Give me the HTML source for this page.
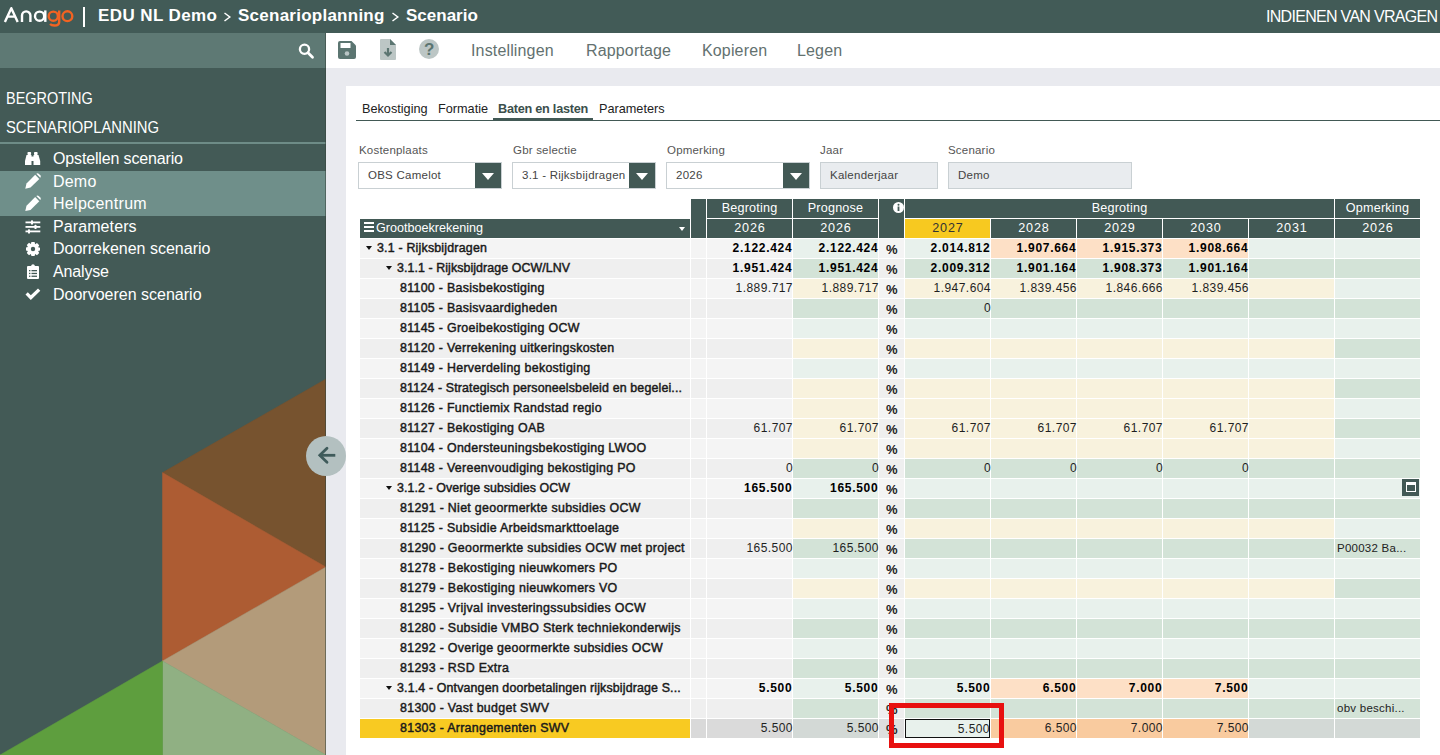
<!DOCTYPE html>
<html><head><meta charset="utf-8"><title>Scenario</title>
<style>
*{box-sizing:border-box}
html,body{margin:0;padding:0}
body{width:1440px;height:755px;overflow:hidden;position:relative;font-family:"Liberation Sans",sans-serif;background:#e9eaef}
.abs{position:absolute}
#top{position:absolute;left:0;top:0;width:1440px;height:33px;background:#425b57;color:#fff}
#side{position:absolute;left:0;top:33px;width:326px;height:722px;background:#435a56;overflow:hidden}
#search{position:absolute;left:0;top:0;width:326px;height:35px;background:#5e7974}
#tool{position:absolute;left:326px;top:33px;width:1114px;height:35px;background:#fff}
#card{position:absolute;left:346px;top:86px;width:1094px;height:669px;background:#fff}
.tb{position:absolute;font-size:16px;color:#63716f;white-space:nowrap;letter-spacing:0.15px}
.menu{position:absolute;left:0;font-size:16px;letter-spacing:-0.15px;color:#fff;white-space:nowrap}
.hdr{position:absolute;left:6px;font-size:16.5px;color:#fff;white-space:nowrap;transform-origin:0 0}
.tab{position:absolute;top:102px;font-size:12.7px;color:#222;white-space:nowrap}
.lab{position:absolute;top:144px;font-size:11.5px;letter-spacing:0.2px;color:#555;white-space:nowrap}
.inp{position:absolute;top:162px;height:27px;border:1px solid #c9d0d3;background:#fff;font-size:11.5px;letter-spacing:0.25px;color:#444;padding:6px 0 0 9px;white-space:nowrap;overflow:hidden}
.inp.dis{background:#e9ecef}
.dd{position:absolute;top:0;right:0;width:26px;height:25px;background:#425955}
.dd:after{content:"";position:absolute;left:7px;top:10px;border-left:6px solid transparent;border-right:6px solid transparent;border-top:7px solid #fff}
.th{position:absolute;background:#425955;color:#fff;font-size:12.6px;text-align:center;white-space:nowrap}
.c{position:absolute;height:19px;font-size:12px;white-space:nowrap;overflow:hidden;color:#222}
.c.n{overflow:visible;text-align:right;padding-right:0px;line-height:18px;font-size:12px;letter-spacing:0.45px;color:#1f1f1f}
.c.n span{margin-right:-1px}
.c.nb span{margin-right:-0.3px}
.c.nb{font-weight:bold;color:#000;font-size:12px;letter-spacing:0.7px}
.c.pct{font-weight:bold;font-size:13px;line-height:21px;padding-left:7px;color:#222}
.c.a .lbl{position:absolute;top:2px;font-size:12.4px;color:#1a1a1a;font-weight:normal;-webkit-text-stroke:0.45px #1a1a1a}
.car{position:absolute;top:7px;width:0;height:0;border-left:3.5px solid transparent;border-right:3.5px solid transparent;border-top:4px solid #111}
.c.k{font-size:11.5px;letter-spacing:0.25px;line-height:19px;padding-left:2px;color:#222}
.edit{background:#e8f1ec;border:1px solid #111;height:19px;line-height:17px}
.cal{position:absolute;right:1px;top:0px;width:17px;height:17px;background:#425955}
.cal:after{content:"";position:absolute;left:3.5px;top:3px;width:10.5px;height:9.5px;border:1.5px solid #fff;border-top-width:3px;box-sizing:border-box}
</style></head><body>
<div id="top">
  <svg class="abs" style="left:0;top:0" width="90" height="33" viewBox="0 0 90 33">
    <g fill="none" stroke-width="2.4" stroke-linecap="butt">
      <path d="M4.9 21.9 L11.3 8.2 L17.7 21.9 M7.6 16.6 H15" stroke="#fff" stroke-linejoin="round"/>
      <path d="M22 21.9 V15.6 A4.2 4.2 0 0 1 30.4 15.6 V21.9" stroke="#fff"/>
      <circle cx="39.6" cy="16.2" r="4.6" stroke="#fff"/>
      <path d="M45.3 10.4 V21.9" stroke="#fff"/>
      <circle cx="53.3" cy="16.2" r="4.6" stroke="#f26322"/>
      <path d="M59.2 10.4 V22 Q59.2 25.5 54.5 25.5 Q51.5 25.5 50 24" stroke="#f26322"/>
      <circle cx="67.4" cy="16.2" r="4.9" stroke="#f26322"/>
    </g>
    <rect x="83" y="7" width="2" height="20" fill="#fff"/>
  </svg>
  <div class="abs" style="left:98px;top:6px;font-size:17px;font-weight:bold;white-space:nowrap;letter-spacing:0.4px">EDU NL Demo</div>
  <svg class="abs" style="left:223px;top:12px" width="9" height="10" viewBox="0 0 9 10"><path d="M1.5 1 L6.8 5 L1.5 9" stroke="#fff" stroke-width="1.5" fill="none"/></svg>
  <div class="abs" style="left:238px;top:6px;font-size:17px;font-weight:bold;white-space:nowrap;letter-spacing:0.25px">Scenarioplanning</div>
  <svg class="abs" style="left:391px;top:12px" width="9" height="10" viewBox="0 0 9 10"><path d="M1.5 1 L6.8 5 L1.5 9" stroke="#fff" stroke-width="1.5" fill="none"/></svg>
  <div class="abs" style="left:406px;top:6px;font-size:17px;font-weight:bold;white-space:nowrap">Scenario</div>
  <div class="abs" style="left:1266px;top:8px;font-size:16px;letter-spacing:-0.7px;white-space:nowrap">INDIENEN VAN VRAGEN</div>
</div>
<div id="side">
  <div id="search">
    <svg class="abs" style="left:296px;top:8px" width="20" height="20" viewBox="0 0 20 20"><circle cx="8.5" cy="8.2" r="4.6" fill="none" stroke="#fff" stroke-width="2.3"/><path d="M12 11.8 L16.5 16.2" stroke="#fff" stroke-width="2.8" stroke-linecap="round"/></svg>
  </div>
  <div class="hdr" style="top:56px;transform:scaleX(0.876)">BEGROTING</div>
  <div class="hdr" style="top:85px;transform:scaleX(0.897)">SCENARIOPLANNING</div>
  <div class="abs" style="left:0;top:109px;width:326px;height:2px;background:#6e8c87"></div>
  <div class="abs" style="left:0;top:138px;width:326px;height:45px;background:#6f8f8a"></div>

  <svg class="abs" style="left:0;top:0" width="60" height="300" viewBox="0 33 60 300" fill="#fff">
    <!-- binoculars 25-40 x, 152-165 y -->
    <rect x="27.5" y="152" width="3.6" height="3" rx="0.8"/>
    <rect x="34" y="152" width="3.6" height="3" rx="0.8"/>
    <path d="M26.5 155 H31.5 V165 H25 L25 161 Z"/>
    <path d="M33.5 155 H38.5 L40.2 161 V165 H33.5 Z"/>
    <rect x="31" y="156.5" width="3" height="4.5"/>
    <!-- pencils -->
    <path d="M25.3 188.7 L26.5 183.5 L35.2 174.8 L39.3 178.9 L30.5 187.6 Z"/>
    <path d="M36.3 173.7 Q37.5 172.6 38.7 173.7 L40.3 175.3 Q41.4 176.5 40.3 177.7 Z" />
    <path d="M25.3 211 L26.5 205.8 L35.2 197.1 L39.3 201.2 L30.5 209.9 Z"/>
    <path d="M36.3 196 Q37.5 194.9 38.7 196 L40.3 197.6 Q41.4 198.8 40.3 200 Z" />
    <!-- sliders 25-40 x 220-233 -->
    <rect x="25.5" y="221.5" width="14.8" height="1.8"/>
    <rect x="25.5" y="226" width="14.8" height="1.8"/>
    <rect x="25.5" y="230.5" width="14.8" height="1.8"/>
    <rect x="31" y="220.3" width="2" height="4.2" rx="0.6"/>
    <rect x="34.5" y="224.8" width="2" height="4.2" rx="0.6"/>
    <rect x="28" y="229.3" width="2" height="4.2" rx="0.6"/>
    <!-- gear center 33,249 -->
    <g transform="translate(33 249)">
      <path d="M-1.6 -7 H1.6 L2.1 -4.8 L4 -5.9 L6.2 -3.7 L5.1 -1.8 L7 -1.3 V1.6 L5.1 2.1 L6.2 4 L4 6.2 L2.1 5.1 L1.6 7 H-1.6 L-2.1 5.1 L-4 6.2 L-6.2 4 L-5.1 2.1 L-7 1.6 V-1.6 L-5.1 -2.1 L-6.2 -4 L-4 -6.2 L-2.1 -5.1 Z"/>
      <circle r="2.2" fill="#435a56"/>
    </g>
    <!-- clipboard 27-39 x 264.5-279 -->
    <path d="M27 267 Q27 266 28 266 H31 Q31.5 264.3 33 264.3 Q34.5 264.3 35 266 H38 Q39 266 39 267 V278 Q39 279 38 279 H28 Q27 279 27 278 Z"/>
    <g fill="#435a56"><rect x="29" y="270" width="1.4" height="1.3"/><rect x="31.5" y="270" width="5.5" height="1.3"/>
    <rect x="29" y="272.8" width="1.4" height="1.3"/><rect x="31.5" y="272.8" width="5.5" height="1.3"/>
    <rect x="29" y="275.6" width="1.4" height="1.3"/><rect x="31.5" y="275.6" width="5.5" height="1.3"/></g>
    <!-- check 25-40 x, 289-300 -->
    <path d="M25.5 294.5 L27.8 292.2 L30.8 295.2 L38 288.5 L40.3 290.8 L30.8 300 Z"/>
  </svg>
  <div class="menu" style="left:53px;top:117px">Opstellen scenario</div>
  <div class="menu" style="left:53px;top:140px;letter-spacing:0.2px">Demo</div>
  <div class="menu" style="left:53px;top:162px;letter-spacing:0.3px">Helpcentrum</div>
  <div class="menu" style="left:53px;top:185px;letter-spacing:0.1px">Parameters</div>
  <div class="menu" style="left:53px;top:207px;letter-spacing:0px">Doorrekenen scenario</div>
  <div class="menu" style="left:53px;top:230px">Analyse</div>
  <div class="menu" style="left:53px;top:253px;letter-spacing:0px">Doorvoeren scenario</div>
  <svg class="abs" style="left:0;top:0" width="326" height="722" viewBox="0 33 326 722">
    <polygon points="162.5,472.6 326,379 326,567" fill="#77532f" stroke="#77532f" stroke-width="0.5"/>
    <polygon points="162.5,472.6 326,567 162.5,661" fill="#ad5c33" stroke="#ad5c33" stroke-width="0.5"/>
    <polygon points="162.5,661 326,567 326,755" fill="#b39b7a" stroke="#b39b7a" stroke-width="0.5"/>
    <polygon points="162.5,661 326,755 162.5,755" fill="#90b083" stroke="#90b083" stroke-width="0.5"/>
    <polygon points="162.5,661 162.5,755 0,755" fill="#5e9e3e" stroke="#5e9e3e" stroke-width="0.5"/>
  </svg>
</div>
<div class="abs" style="left:325px;top:33px;width:1px;height:722px;background:rgba(55,70,62,0.55)"></div>
<div id="tool">
  <svg class="abs" style="left:12px;top:8px" width="18" height="18" viewBox="0 0 18 18"><path d="M0 2 Q0 0 2 0 L13.5 0 L18 4.5 L18 16 Q18 18 16 18 L2 18 Q0 18 0 16Z" fill="#5b7571"/><rect x="2.5" y="2" width="10" height="5" fill="#fff"/><circle cx="9" cy="12.5" r="2.3" fill="#b9c4c4"/></svg>
  <svg class="abs" style="left:54px;top:6px" width="16" height="21" viewBox="0 0 16 21"><path d="M1 0 L10 0 L16 6 L16 20 Q16 21 15 21 L1 21 Q0 21 0 20 L0 1 Q0 0 1 0Z" fill="#bcc6c5"/><path d="M10 0 L16 6 L10 6Z" fill="#5b7571"/><path d="M8 9 L8 16 M4.5 13 L8 16.5 L11.5 13" stroke="#5b7571" stroke-width="2.2" fill="none"/></svg>
  <svg class="abs" style="left:93px;top:6px" width="20" height="20" viewBox="0 0 20 20"><circle cx="10" cy="10" r="10" fill="#bcc6c5"/><text x="10.2" y="16" font-family="Liberation Sans" font-weight="bold" font-size="17" fill="#5b7571" text-anchor="middle">?</text></svg>
  <div class="tb" style="left:145px;top:9px">Instellingen</div>
  <div class="tb" style="left:260px;top:9px">Rapportage</div>
  <div class="tb" style="left:376px;top:9px">Kopieren</div>
  <div class="tb" style="left:471px;top:9px">Legen</div>
</div>
<div id="card"></div>
<div class="tab" style="left:362px">Bekostiging</div>
<div class="tab" style="left:438px">Formatie</div>
<div class="tab" style="left:498px;font-weight:bold;color:#3b4f4c;letter-spacing:-0.25px">Baten en lasten</div>
<div class="tab" style="left:599px">Parameters</div>
<div class="abs" style="left:356px;top:120px;width:1084px;height:1px;background:#425955"></div>
<div class="abs" style="left:493px;top:118px;width:100px;height:2.6px;background:#425955"></div>

<div class="lab" style="left:359px">Kostenplaats</div>
<div class="lab" style="left:513px">Gbr selectie</div>
<div class="lab" style="left:667px">Opmerking</div>
<div class="lab" style="left:820px">Jaar</div>
<div class="lab" style="left:948px">Scenario</div>
<div class="inp" style="left:358px;width:144px">OBS Camelot<div class="dd"></div></div>
<div class="inp" style="left:512px;width:144px">3.1 - Rijksbijdragen<div class="dd"></div></div>
<div class="inp" style="left:666px;width:144px">2026<div class="dd"></div></div>
<div class="inp dis" style="left:820px;width:118px">Kalenderjaar</div>
<div class="inp dis" style="left:948px;width:184px">Demo</div>

<!-- table header -->
<div class="th" style="left:360px;top:219px;width:330px;height:19px;text-align:left;padding-left:16px;line-height:19px">Grootboekrekening</div>
<div class="abs" style="left:364px;top:222px;width:10px;height:10px;border-top:2px solid #fff;border-bottom:2px solid #fff"><div style="position:absolute;left:0;top:2px;width:10px;height:2px;background:#fff"></div></div>
<div class="abs" style="left:679px;top:227px;border-left:3.5px solid transparent;border-right:3.5px solid transparent;border-top:4px solid #fff"></div>
<div class="th" style="left:691px;top:199px;width:15px;height:39px"></div>
<div class="th" style="left:707px;top:199px;width:85px;height:19px;line-height:19px;letter-spacing:0.2px">Begroting</div>
<div class="th" style="left:707px;top:219px;width:85px;height:19px;line-height:19px;letter-spacing:0.8px;text-indent:0.8px">2026</div>
<div class="th" style="left:793px;top:199px;width:85px;height:19px;line-height:19px;letter-spacing:0.2px">Prognose</div>
<div class="th" style="left:793px;top:219px;width:85px;height:19px;line-height:19px;letter-spacing:0.8px;text-indent:0.8px">2026</div>
<div class="th" style="left:879px;top:199px;width:25px;height:39px"></div>
<svg class="abs" style="left:893px;top:202px" width="11" height="11" viewBox="0 0 11 11"><circle cx="5.5" cy="5.5" r="5.5" fill="#fff"/><rect x="4.6" y="4.5" width="1.8" height="4.5" fill="#425955"/><circle cx="5.5" cy="2.8" r="1" fill="#425955"/></svg>
<div class="th" style="left:905px;top:199px;width:429px;height:19px;line-height:19px;letter-spacing:0.2px">Begroting</div>
<div class="th" style="left:1335px;top:199px;width:85px;height:19px;line-height:19px;letter-spacing:0.2px">Opmerking</div>
<div class="th" style="left:905px;top:219px;width:85px;height:19px;line-height:19px;background:#f7c920;color:#333;letter-spacing:0.8px;text-indent:0.8px">2027</div>
<div class="th" style="left:991px;top:219px;width:85px;height:19px;line-height:19px;letter-spacing:0.8px;text-indent:0.8px">2028</div>
<div class="th" style="left:1077px;top:219px;width:85px;height:19px;line-height:19px;letter-spacing:0.8px;text-indent:0.8px">2029</div>
<div class="th" style="left:1163px;top:219px;width:85px;height:19px;line-height:19px;letter-spacing:0.8px;text-indent:0.8px">2030</div>
<div class="th" style="left:1249px;top:219px;width:85px;height:19px;line-height:19px;letter-spacing:0.8px;text-indent:0.8px">2031</div>
<div class="th" style="left:1335px;top:219px;width:85px;height:19px;line-height:19px;letter-spacing:0.8px;text-indent:0.8px">2026</div>
<div class="c a gb" style="left:360px;top:239px;width:330px;background:#f4f4f4"><i class="car" style="left:6px"></i><span class="lbl" style="left:17px; letter-spacing:0.2px;">3.1 - Rijksbijdragen</span></div>
<div class="c " style="left:691px;top:239px;width:15px;background:#f4f4f4"></div>
<div class="c n nb" style="left:707px;top:239px;width:85px;background:#f4f4f4"><span>2.122.424</span></div>
<div class="c n nb" style="left:793px;top:239px;width:85px;background:#e8f1ec"><span>2.122.424</span></div>
<div class="c pct" style="left:879px;top:239px;width:25px;background:#f4f4f4">%</div>
<div class="c n nb" style="left:905px;top:239px;width:85px;background:#e8f1ec"><span>2.014.812</span></div>
<div class="c n nb" style="left:991px;top:239px;width:85px;background:#fde0c6"><span>1.907.664</span></div>
<div class="c n nb" style="left:1077px;top:239px;width:85px;background:#fde0c6"><span>1.915.373</span></div>
<div class="c n nb" style="left:1163px;top:239px;width:85px;background:#fde0c6"><span>1.908.664</span></div>
<div class="c " style="left:1249px;top:239px;width:85px;background:#e8f1ec"></div>
<div class="c k" style="left:1335px;top:239px;width:85px;background:#e8f1ec"></div>
<div class="c a gb" style="left:360px;top:259px;width:330px;background:#efefef"><i class="car" style="left:26px"></i><span class="lbl" style="left:37px; letter-spacing:0.08px;">3.1.1 - Rijksbijdrage OCW/LNV</span></div>
<div class="c " style="left:691px;top:259px;width:15px;background:#efefef"></div>
<div class="c n nb" style="left:707px;top:259px;width:85px;background:#efefef"><span>1.951.424</span></div>
<div class="c n nb" style="left:793px;top:259px;width:85px;background:#d3e3d7"><span>1.951.424</span></div>
<div class="c pct" style="left:879px;top:259px;width:25px;background:#efefef">%</div>
<div class="c n nb" style="left:905px;top:259px;width:85px;background:#d3e3d7"><span>2.009.312</span></div>
<div class="c n nb" style="left:991px;top:259px;width:85px;background:#d3e3d7"><span>1.901.164</span></div>
<div class="c n nb" style="left:1077px;top:259px;width:85px;background:#d3e3d7"><span>1.908.373</span></div>
<div class="c n nb" style="left:1163px;top:259px;width:85px;background:#d3e3d7"><span>1.901.164</span></div>
<div class="c " style="left:1249px;top:259px;width:85px;background:#d3e3d7"></div>
<div class="c k" style="left:1335px;top:259px;width:85px;background:#d3e3d7"></div>
<div class="c a" style="left:360px;top:279px;width:330px;background:#f4f4f4"><span class="lbl" style="left:40px; letter-spacing:0.3px;">81100 - Basisbekostiging</span></div>
<div class="c " style="left:691px;top:279px;width:15px;background:#f4f4f4"></div>
<div class="c n" style="left:707px;top:279px;width:85px;background:#f4f4f4"><span>1.889.717</span></div>
<div class="c n" style="left:793px;top:279px;width:85px;background:#f8f2dd"><span>1.889.717</span></div>
<div class="c pct" style="left:879px;top:279px;width:25px;background:#f4f4f4">%</div>
<div class="c n" style="left:905px;top:279px;width:85px;background:#f8f2dd"><span>1.947.604</span></div>
<div class="c n" style="left:991px;top:279px;width:85px;background:#f8f2dd"><span>1.839.456</span></div>
<div class="c n" style="left:1077px;top:279px;width:85px;background:#f8f2dd"><span>1.846.666</span></div>
<div class="c n" style="left:1163px;top:279px;width:85px;background:#f8f2dd"><span>1.839.456</span></div>
<div class="c " style="left:1249px;top:279px;width:85px;background:#f8f2dd"></div>
<div class="c k" style="left:1335px;top:279px;width:85px;background:#e8f1ec"></div>
<div class="c a" style="left:360px;top:299px;width:330px;background:#efefef"><span class="lbl" style="left:40px; letter-spacing:0.3px;">81105 - Basisvaardigheden</span></div>
<div class="c " style="left:691px;top:299px;width:15px;background:#efefef"></div>
<div class="c n" style="left:707px;top:299px;width:85px;background:#efefef"></div>
<div class="c n" style="left:793px;top:299px;width:85px;background:#d3e3d7"></div>
<div class="c pct" style="left:879px;top:299px;width:25px;background:#efefef">%</div>
<div class="c n" style="left:905px;top:299px;width:85px;background:#d3e3d7"><span>0</span></div>
<div class="c n" style="left:991px;top:299px;width:85px;background:#d3e3d7"></div>
<div class="c n" style="left:1077px;top:299px;width:85px;background:#d3e3d7"></div>
<div class="c n" style="left:1163px;top:299px;width:85px;background:#d3e3d7"></div>
<div class="c " style="left:1249px;top:299px;width:85px;background:#d3e3d7"></div>
<div class="c k" style="left:1335px;top:299px;width:85px;background:#d3e3d7"></div>
<div class="c a" style="left:360px;top:319px;width:330px;background:#f4f4f4"><span class="lbl" style="left:40px; letter-spacing:0.3px;">81145 - Groeibekostiging OCW</span></div>
<div class="c " style="left:691px;top:319px;width:15px;background:#f4f4f4"></div>
<div class="c n" style="left:707px;top:319px;width:85px;background:#f4f4f4"></div>
<div class="c n" style="left:793px;top:319px;width:85px;background:#e8f1ec"></div>
<div class="c pct" style="left:879px;top:319px;width:25px;background:#f4f4f4">%</div>
<div class="c n" style="left:905px;top:319px;width:85px;background:#e8f1ec"></div>
<div class="c n" style="left:991px;top:319px;width:85px;background:#e8f1ec"></div>
<div class="c n" style="left:1077px;top:319px;width:85px;background:#e8f1ec"></div>
<div class="c n" style="left:1163px;top:319px;width:85px;background:#e8f1ec"></div>
<div class="c " style="left:1249px;top:319px;width:85px;background:#e8f1ec"></div>
<div class="c k" style="left:1335px;top:319px;width:85px;background:#e8f1ec"></div>
<div class="c a" style="left:360px;top:339px;width:330px;background:#efefef"><span class="lbl" style="left:40px; letter-spacing:0.3px;">81120 - Verrekening uitkeringskosten</span></div>
<div class="c " style="left:691px;top:339px;width:15px;background:#efefef"></div>
<div class="c n" style="left:707px;top:339px;width:85px;background:#efefef"></div>
<div class="c n" style="left:793px;top:339px;width:85px;background:#f8f2dd"></div>
<div class="c pct" style="left:879px;top:339px;width:25px;background:#efefef">%</div>
<div class="c n" style="left:905px;top:339px;width:85px;background:#f8f2dd"></div>
<div class="c n" style="left:991px;top:339px;width:85px;background:#f8f2dd"></div>
<div class="c n" style="left:1077px;top:339px;width:85px;background:#f8f2dd"></div>
<div class="c n" style="left:1163px;top:339px;width:85px;background:#f8f2dd"></div>
<div class="c " style="left:1249px;top:339px;width:85px;background:#f8f2dd"></div>
<div class="c k" style="left:1335px;top:339px;width:85px;background:#d3e3d7"></div>
<div class="c a" style="left:360px;top:359px;width:330px;background:#f4f4f4"><span class="lbl" style="left:40px; letter-spacing:0.3px;">81149 - Herverdeling bekostiging</span></div>
<div class="c " style="left:691px;top:359px;width:15px;background:#f4f4f4"></div>
<div class="c n" style="left:707px;top:359px;width:85px;background:#f4f4f4"></div>
<div class="c n" style="left:793px;top:359px;width:85px;background:#e8f1ec"></div>
<div class="c pct" style="left:879px;top:359px;width:25px;background:#f4f4f4">%</div>
<div class="c n" style="left:905px;top:359px;width:85px;background:#e8f1ec"></div>
<div class="c n" style="left:991px;top:359px;width:85px;background:#e8f1ec"></div>
<div class="c n" style="left:1077px;top:359px;width:85px;background:#e8f1ec"></div>
<div class="c n" style="left:1163px;top:359px;width:85px;background:#e8f1ec"></div>
<div class="c " style="left:1249px;top:359px;width:85px;background:#e8f1ec"></div>
<div class="c k" style="left:1335px;top:359px;width:85px;background:#e8f1ec"></div>
<div class="c a" style="left:360px;top:379px;width:330px;background:#efefef"><span class="lbl" style="left:40px; letter-spacing:0.15px;">81124 - Strategisch personeelsbeleid en begelei...</span></div>
<div class="c " style="left:691px;top:379px;width:15px;background:#efefef"></div>
<div class="c n" style="left:707px;top:379px;width:85px;background:#efefef"></div>
<div class="c n" style="left:793px;top:379px;width:85px;background:#f8f2dd"></div>
<div class="c pct" style="left:879px;top:379px;width:25px;background:#efefef">%</div>
<div class="c n" style="left:905px;top:379px;width:85px;background:#f8f2dd"></div>
<div class="c n" style="left:991px;top:379px;width:85px;background:#f8f2dd"></div>
<div class="c n" style="left:1077px;top:379px;width:85px;background:#f8f2dd"></div>
<div class="c n" style="left:1163px;top:379px;width:85px;background:#f8f2dd"></div>
<div class="c " style="left:1249px;top:379px;width:85px;background:#f8f2dd"></div>
<div class="c k" style="left:1335px;top:379px;width:85px;background:#d3e3d7"></div>
<div class="c a" style="left:360px;top:399px;width:330px;background:#f4f4f4"><span class="lbl" style="left:40px; letter-spacing:0.3px;">81126 - Functiemix Randstad regio</span></div>
<div class="c " style="left:691px;top:399px;width:15px;background:#f4f4f4"></div>
<div class="c n" style="left:707px;top:399px;width:85px;background:#f4f4f4"></div>
<div class="c n" style="left:793px;top:399px;width:85px;background:#f8f2dd"></div>
<div class="c pct" style="left:879px;top:399px;width:25px;background:#f4f4f4">%</div>
<div class="c n" style="left:905px;top:399px;width:85px;background:#f8f2dd"></div>
<div class="c n" style="left:991px;top:399px;width:85px;background:#f8f2dd"></div>
<div class="c n" style="left:1077px;top:399px;width:85px;background:#f8f2dd"></div>
<div class="c n" style="left:1163px;top:399px;width:85px;background:#f8f2dd"></div>
<div class="c " style="left:1249px;top:399px;width:85px;background:#f8f2dd"></div>
<div class="c k" style="left:1335px;top:399px;width:85px;background:#e8f1ec"></div>
<div class="c a" style="left:360px;top:419px;width:330px;background:#efefef"><span class="lbl" style="left:40px; letter-spacing:0.3px;">81127 - Bekostiging OAB</span></div>
<div class="c " style="left:691px;top:419px;width:15px;background:#efefef"></div>
<div class="c n" style="left:707px;top:419px;width:85px;background:#efefef"><span>61.707</span></div>
<div class="c n" style="left:793px;top:419px;width:85px;background:#f8f2dd"><span>61.707</span></div>
<div class="c pct" style="left:879px;top:419px;width:25px;background:#efefef">%</div>
<div class="c n" style="left:905px;top:419px;width:85px;background:#f8f2dd"><span>61.707</span></div>
<div class="c n" style="left:991px;top:419px;width:85px;background:#f8f2dd"><span>61.707</span></div>
<div class="c n" style="left:1077px;top:419px;width:85px;background:#f8f2dd"><span>61.707</span></div>
<div class="c n" style="left:1163px;top:419px;width:85px;background:#f8f2dd"><span>61.707</span></div>
<div class="c " style="left:1249px;top:419px;width:85px;background:#f8f2dd"></div>
<div class="c k" style="left:1335px;top:419px;width:85px;background:#d3e3d7"></div>
<div class="c a" style="left:360px;top:439px;width:330px;background:#f4f4f4"><span class="lbl" style="left:40px; letter-spacing:0.3px;">81104 - Ondersteuningsbekostiging LWOO</span></div>
<div class="c " style="left:691px;top:439px;width:15px;background:#f4f4f4"></div>
<div class="c n" style="left:707px;top:439px;width:85px;background:#f4f4f4"></div>
<div class="c n" style="left:793px;top:439px;width:85px;background:#f8f2dd"></div>
<div class="c pct" style="left:879px;top:439px;width:25px;background:#f4f4f4">%</div>
<div class="c n" style="left:905px;top:439px;width:85px;background:#f8f2dd"></div>
<div class="c n" style="left:991px;top:439px;width:85px;background:#f8f2dd"></div>
<div class="c n" style="left:1077px;top:439px;width:85px;background:#f8f2dd"></div>
<div class="c n" style="left:1163px;top:439px;width:85px;background:#f8f2dd"></div>
<div class="c " style="left:1249px;top:439px;width:85px;background:#f8f2dd"></div>
<div class="c k" style="left:1335px;top:439px;width:85px;background:#e8f1ec"></div>
<div class="c a" style="left:360px;top:459px;width:330px;background:#efefef"><span class="lbl" style="left:40px; letter-spacing:0.3px;">81148 - Vereenvoudiging bekostiging PO</span></div>
<div class="c " style="left:691px;top:459px;width:15px;background:#efefef"></div>
<div class="c n" style="left:707px;top:459px;width:85px;background:#efefef"><span>0</span></div>
<div class="c n" style="left:793px;top:459px;width:85px;background:#d3e3d7"><span>0</span></div>
<div class="c pct" style="left:879px;top:459px;width:25px;background:#efefef">%</div>
<div class="c n" style="left:905px;top:459px;width:85px;background:#d3e3d7"><span>0</span></div>
<div class="c n" style="left:991px;top:459px;width:85px;background:#d3e3d7"><span>0</span></div>
<div class="c n" style="left:1077px;top:459px;width:85px;background:#d3e3d7"><span>0</span></div>
<div class="c n" style="left:1163px;top:459px;width:85px;background:#d3e3d7"><span>0</span></div>
<div class="c " style="left:1249px;top:459px;width:85px;background:#d3e3d7"></div>
<div class="c k" style="left:1335px;top:459px;width:85px;background:#d3e3d7"></div>
<div class="c a gb" style="left:360px;top:479px;width:330px;background:#f4f4f4"><i class="car" style="left:26px"></i><span class="lbl" style="left:37px; letter-spacing:0.08px;">3.1.2 - Overige subsidies OCW</span></div>
<div class="c " style="left:691px;top:479px;width:15px;background:#f4f4f4"></div>
<div class="c n nb" style="left:707px;top:479px;width:85px;background:#f4f4f4"><span>165.500</span></div>
<div class="c n nb" style="left:793px;top:479px;width:85px;background:#e8f1ec"><span>165.500</span></div>
<div class="c pct" style="left:879px;top:479px;width:25px;background:#f4f4f4">%</div>
<div class="c n nb" style="left:905px;top:479px;width:85px;background:#e8f1ec"></div>
<div class="c n nb" style="left:991px;top:479px;width:85px;background:#e8f1ec"></div>
<div class="c n nb" style="left:1077px;top:479px;width:85px;background:#e8f1ec"></div>
<div class="c n nb" style="left:1163px;top:479px;width:85px;background:#e8f1ec"></div>
<div class="c " style="left:1249px;top:479px;width:85px;background:#e8f1ec"></div>
<div class="c k" style="left:1335px;top:479px;width:85px;background:#e8f1ec"><i class="cal"></i></div>
<div class="c a" style="left:360px;top:499px;width:330px;background:#efefef"><span class="lbl" style="left:40px; letter-spacing:0.3px;">81291 - Niet geoormerkte subsidies OCW</span></div>
<div class="c " style="left:691px;top:499px;width:15px;background:#efefef"></div>
<div class="c n" style="left:707px;top:499px;width:85px;background:#efefef"></div>
<div class="c n" style="left:793px;top:499px;width:85px;background:#d3e3d7"></div>
<div class="c pct" style="left:879px;top:499px;width:25px;background:#efefef">%</div>
<div class="c n" style="left:905px;top:499px;width:85px;background:#d3e3d7"></div>
<div class="c n" style="left:991px;top:499px;width:85px;background:#d3e3d7"></div>
<div class="c n" style="left:1077px;top:499px;width:85px;background:#d3e3d7"></div>
<div class="c n" style="left:1163px;top:499px;width:85px;background:#d3e3d7"></div>
<div class="c " style="left:1249px;top:499px;width:85px;background:#d3e3d7"></div>
<div class="c k" style="left:1335px;top:499px;width:85px;background:#d3e3d7"></div>
<div class="c a" style="left:360px;top:519px;width:330px;background:#f4f4f4"><span class="lbl" style="left:40px; letter-spacing:0.3px;">81125 - Subsidie Arbeidsmarkttoelage</span></div>
<div class="c " style="left:691px;top:519px;width:15px;background:#f4f4f4"></div>
<div class="c n" style="left:707px;top:519px;width:85px;background:#f4f4f4"></div>
<div class="c n" style="left:793px;top:519px;width:85px;background:#f8f2dd"></div>
<div class="c pct" style="left:879px;top:519px;width:25px;background:#f4f4f4">%</div>
<div class="c n" style="left:905px;top:519px;width:85px;background:#f8f2dd"></div>
<div class="c n" style="left:991px;top:519px;width:85px;background:#f8f2dd"></div>
<div class="c n" style="left:1077px;top:519px;width:85px;background:#f8f2dd"></div>
<div class="c n" style="left:1163px;top:519px;width:85px;background:#f8f2dd"></div>
<div class="c " style="left:1249px;top:519px;width:85px;background:#f8f2dd"></div>
<div class="c k" style="left:1335px;top:519px;width:85px;background:#e8f1ec"></div>
<div class="c a" style="left:360px;top:539px;width:330px;background:#efefef"><span class="lbl" style="left:40px; letter-spacing:0.3px;">81290 - Geoormerkte subsidies OCW met project</span></div>
<div class="c " style="left:691px;top:539px;width:15px;background:#efefef"></div>
<div class="c n" style="left:707px;top:539px;width:85px;background:#efefef"><span>165.500</span></div>
<div class="c n" style="left:793px;top:539px;width:85px;background:#d3e3d7"><span>165.500</span></div>
<div class="c pct" style="left:879px;top:539px;width:25px;background:#efefef">%</div>
<div class="c n" style="left:905px;top:539px;width:85px;background:#d3e3d7"></div>
<div class="c n" style="left:991px;top:539px;width:85px;background:#d3e3d7"></div>
<div class="c n" style="left:1077px;top:539px;width:85px;background:#d3e3d7"></div>
<div class="c n" style="left:1163px;top:539px;width:85px;background:#d3e3d7"></div>
<div class="c " style="left:1249px;top:539px;width:85px;background:#d3e3d7"></div>
<div class="c k" style="left:1335px;top:539px;width:85px;background:#d3e3d7">P00032 Ba...</div>
<div class="c a" style="left:360px;top:559px;width:330px;background:#f4f4f4"><span class="lbl" style="left:40px; letter-spacing:0.3px;">81278 - Bekostiging nieuwkomers PO</span></div>
<div class="c " style="left:691px;top:559px;width:15px;background:#f4f4f4"></div>
<div class="c n" style="left:707px;top:559px;width:85px;background:#f4f4f4"></div>
<div class="c n" style="left:793px;top:559px;width:85px;background:#e8f1ec"></div>
<div class="c pct" style="left:879px;top:559px;width:25px;background:#f4f4f4">%</div>
<div class="c n" style="left:905px;top:559px;width:85px;background:#e8f1ec"></div>
<div class="c n" style="left:991px;top:559px;width:85px;background:#e8f1ec"></div>
<div class="c n" style="left:1077px;top:559px;width:85px;background:#e8f1ec"></div>
<div class="c n" style="left:1163px;top:559px;width:85px;background:#e8f1ec"></div>
<div class="c " style="left:1249px;top:559px;width:85px;background:#e8f1ec"></div>
<div class="c k" style="left:1335px;top:559px;width:85px;background:#e8f1ec"></div>
<div class="c a" style="left:360px;top:579px;width:330px;background:#efefef"><span class="lbl" style="left:40px; letter-spacing:0.3px;">81279 - Bekostiging nieuwkomers VO</span></div>
<div class="c " style="left:691px;top:579px;width:15px;background:#efefef"></div>
<div class="c n" style="left:707px;top:579px;width:85px;background:#efefef"></div>
<div class="c n" style="left:793px;top:579px;width:85px;background:#f8f2dd"></div>
<div class="c pct" style="left:879px;top:579px;width:25px;background:#efefef">%</div>
<div class="c n" style="left:905px;top:579px;width:85px;background:#f8f2dd"></div>
<div class="c n" style="left:991px;top:579px;width:85px;background:#f8f2dd"></div>
<div class="c n" style="left:1077px;top:579px;width:85px;background:#f8f2dd"></div>
<div class="c n" style="left:1163px;top:579px;width:85px;background:#f8f2dd"></div>
<div class="c " style="left:1249px;top:579px;width:85px;background:#f8f2dd"></div>
<div class="c k" style="left:1335px;top:579px;width:85px;background:#d3e3d7"></div>
<div class="c a" style="left:360px;top:599px;width:330px;background:#f4f4f4"><span class="lbl" style="left:40px; letter-spacing:0.3px;">81295 - Vrijval investeringssubsidies OCW</span></div>
<div class="c " style="left:691px;top:599px;width:15px;background:#f4f4f4"></div>
<div class="c n" style="left:707px;top:599px;width:85px;background:#f4f4f4"></div>
<div class="c n" style="left:793px;top:599px;width:85px;background:#e8f1ec"></div>
<div class="c pct" style="left:879px;top:599px;width:25px;background:#f4f4f4">%</div>
<div class="c n" style="left:905px;top:599px;width:85px;background:#e8f1ec"></div>
<div class="c n" style="left:991px;top:599px;width:85px;background:#e8f1ec"></div>
<div class="c n" style="left:1077px;top:599px;width:85px;background:#e8f1ec"></div>
<div class="c n" style="left:1163px;top:599px;width:85px;background:#e8f1ec"></div>
<div class="c " style="left:1249px;top:599px;width:85px;background:#e8f1ec"></div>
<div class="c k" style="left:1335px;top:599px;width:85px;background:#e8f1ec"></div>
<div class="c a" style="left:360px;top:619px;width:330px;background:#efefef"><span class="lbl" style="left:40px; letter-spacing:0.3px;">81280 - Subsidie VMBO Sterk techniekonderwijs</span></div>
<div class="c " style="left:691px;top:619px;width:15px;background:#efefef"></div>
<div class="c n" style="left:707px;top:619px;width:85px;background:#efefef"></div>
<div class="c n" style="left:793px;top:619px;width:85px;background:#d3e3d7"></div>
<div class="c pct" style="left:879px;top:619px;width:25px;background:#efefef">%</div>
<div class="c n" style="left:905px;top:619px;width:85px;background:#d3e3d7"></div>
<div class="c n" style="left:991px;top:619px;width:85px;background:#d3e3d7"></div>
<div class="c n" style="left:1077px;top:619px;width:85px;background:#d3e3d7"></div>
<div class="c n" style="left:1163px;top:619px;width:85px;background:#d3e3d7"></div>
<div class="c " style="left:1249px;top:619px;width:85px;background:#d3e3d7"></div>
<div class="c k" style="left:1335px;top:619px;width:85px;background:#d3e3d7"></div>
<div class="c a" style="left:360px;top:639px;width:330px;background:#f4f4f4"><span class="lbl" style="left:40px; letter-spacing:0.3px;">81292 - Overige geoormerkte subsidies OCW</span></div>
<div class="c " style="left:691px;top:639px;width:15px;background:#f4f4f4"></div>
<div class="c n" style="left:707px;top:639px;width:85px;background:#f4f4f4"></div>
<div class="c n" style="left:793px;top:639px;width:85px;background:#e8f1ec"></div>
<div class="c pct" style="left:879px;top:639px;width:25px;background:#f4f4f4">%</div>
<div class="c n" style="left:905px;top:639px;width:85px;background:#e8f1ec"></div>
<div class="c n" style="left:991px;top:639px;width:85px;background:#e8f1ec"></div>
<div class="c n" style="left:1077px;top:639px;width:85px;background:#e8f1ec"></div>
<div class="c n" style="left:1163px;top:639px;width:85px;background:#e8f1ec"></div>
<div class="c " style="left:1249px;top:639px;width:85px;background:#e8f1ec"></div>
<div class="c k" style="left:1335px;top:639px;width:85px;background:#e8f1ec"></div>
<div class="c a" style="left:360px;top:659px;width:330px;background:#efefef"><span class="lbl" style="left:40px; letter-spacing:0.3px;">81293 - RSD Extra</span></div>
<div class="c " style="left:691px;top:659px;width:15px;background:#efefef"></div>
<div class="c n" style="left:707px;top:659px;width:85px;background:#efefef"></div>
<div class="c n" style="left:793px;top:659px;width:85px;background:#d3e3d7"></div>
<div class="c pct" style="left:879px;top:659px;width:25px;background:#efefef">%</div>
<div class="c n" style="left:905px;top:659px;width:85px;background:#d3e3d7"></div>
<div class="c n" style="left:991px;top:659px;width:85px;background:#d3e3d7"></div>
<div class="c n" style="left:1077px;top:659px;width:85px;background:#d3e3d7"></div>
<div class="c n" style="left:1163px;top:659px;width:85px;background:#d3e3d7"></div>
<div class="c " style="left:1249px;top:659px;width:85px;background:#d3e3d7"></div>
<div class="c k" style="left:1335px;top:659px;width:85px;background:#d3e3d7"></div>
<div class="c a gb" style="left:360px;top:679px;width:330px;background:#f4f4f4"><i class="car" style="left:26px"></i><span class="lbl" style="left:37px; letter-spacing:0.15px;">3.1.4 - Ontvangen doorbetalingen rijksbijdrage S...</span></div>
<div class="c " style="left:691px;top:679px;width:15px;background:#f4f4f4"></div>
<div class="c n nb" style="left:707px;top:679px;width:85px;background:#f4f4f4"><span>5.500</span></div>
<div class="c n nb" style="left:793px;top:679px;width:85px;background:#e8f1ec"><span>5.500</span></div>
<div class="c pct" style="left:879px;top:679px;width:25px;background:#f4f4f4">%</div>
<div class="c n nb" style="left:905px;top:679px;width:85px;background:#e8f1ec"><span>5.500</span></div>
<div class="c n nb" style="left:991px;top:679px;width:85px;background:#fde0c6"><span>6.500</span></div>
<div class="c n nb" style="left:1077px;top:679px;width:85px;background:#fde0c6"><span>7.000</span></div>
<div class="c n nb" style="left:1163px;top:679px;width:85px;background:#fde0c6"><span>7.500</span></div>
<div class="c " style="left:1249px;top:679px;width:85px;background:#e8f1ec"></div>
<div class="c k" style="left:1335px;top:679px;width:85px;background:#e8f1ec"></div>
<div class="c a" style="left:360px;top:699px;width:330px;background:#efefef"><span class="lbl" style="left:40px; letter-spacing:0.3px;">81300 - Vast budget SWV</span></div>
<div class="c " style="left:691px;top:699px;width:15px;background:#efefef"></div>
<div class="c n" style="left:707px;top:699px;width:85px;background:#efefef"></div>
<div class="c n" style="left:793px;top:699px;width:85px;background:#d3e3d7"></div>
<div class="c pct" style="left:879px;top:699px;width:25px;background:#efefef">%</div>
<div class="c n" style="left:905px;top:699px;width:85px;background:#d3e3d7"></div>
<div class="c n" style="left:991px;top:699px;width:85px;background:#d3e3d7"></div>
<div class="c n" style="left:1077px;top:699px;width:85px;background:#d3e3d7"></div>
<div class="c n" style="left:1163px;top:699px;width:85px;background:#d3e3d7"></div>
<div class="c " style="left:1249px;top:699px;width:85px;background:#d3e3d7"></div>
<div class="c k" style="left:1335px;top:699px;width:85px;background:#d3e3d7">obv beschi...</div>
<div class="c a" style="left:360px;top:719px;width:330px;background:#f8ca22"><span class="lbl" style="left:40px; letter-spacing:0.3px;">81303 - Arrangementen SWV</span></div>
<div class="c " style="left:691px;top:719px;width:15px;background:#d9d9d9"></div>
<div class="c n" style="left:707px;top:719px;width:85px;background:#dadada"><span>5.500</span></div>
<div class="c n" style="left:793px;top:719px;width:85px;background:#d3d9d6"><span>5.500</span></div>
<div class="c pct" style="left:879px;top:719px;width:25px;background:#dedede">%</div>
<div class="c n edit" style="left:905px;top:719px;width:85px;"><span>5.500</span></div>
<div class="c n" style="left:991px;top:719px;width:85px;background:#f9cb9f"><span>6.500</span></div>
<div class="c n" style="left:1077px;top:719px;width:85px;background:#f9cb9f"><span>7.000</span></div>
<div class="c n" style="left:1163px;top:719px;width:85px;background:#f9cb9f"><span>7.500</span></div>
<div class="c " style="left:1249px;top:719px;width:85px;background:#d3d9d6"></div>
<div class="c k" style="left:1335px;top:719px;width:85px;background:#d3d9d6"></div>
<!-- red annotation box -->
<div class="abs" style="left:889px;top:703px;width:115px;height:45px;border:5px solid #e8100f"></div>
<!-- collapse button -->
<div class="abs" style="left:306px;top:436px;width:40px;height:40px;border-radius:50%;background:#b3c0c0"></div>
<svg class="abs" style="left:316px;top:446px" width="20" height="20" viewBox="0 0 20 20"><path d="M19.3 9.3 L3.5 9.3" stroke="#3f5b5b" stroke-width="2.8" fill="none"/><path d="M11 2.3 L3.8 9.3 L11 16.3" stroke="#3f5b5b" stroke-width="2.8" fill="none" stroke-linecap="round" stroke-linejoin="miter"/></svg>
</body></html>
